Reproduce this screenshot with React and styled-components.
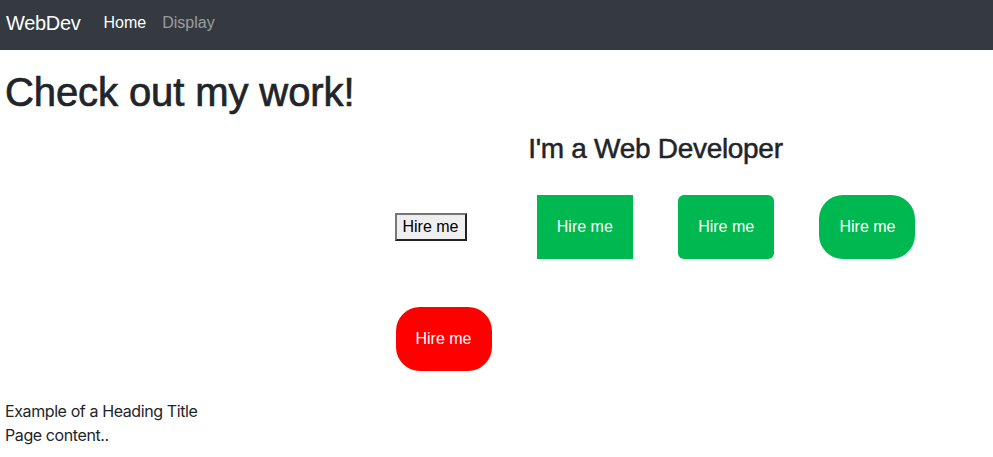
import React from "react";
import styled, { createGlobalStyle } from "styled-components";

const Global = createGlobalStyle`
  html, body { margin: 0; padding: 0; background: #fff; }
  body { font-family: "Liberation Sans", Arial, sans-serif; color: #212529; font-size: 16px; line-height: 1.5; }
`;

const Navbar = styled.nav`
  height: 50px;
  background: #343a40;
  display: flex;
  align-items: center;
  padding: 0 6px 4px;
  box-sizing: border-box;
`;

const Brand = styled.a`
  color: #fff;
  font-size: 20px;
  letter-spacing: -0.3px;
  margin-right: 23px;
  text-decoration: none;
`;

const NavLink = styled.a`
  color: ${(p) => (p.$active ? "#fff" : "rgba(255,255,255,0.5)")};
  font-size: 16px;
  margin-right: 16px;
  text-decoration: none;
`;

const Title = styled.h1`
  font-family: "Liberation Sans", Arial, sans-serif;
  font-size: 40px;
  font-weight: 500;
  letter-spacing: -0.1px;
  -webkit-text-stroke: 0.7px currentColor;
  line-height: 1.2;
  margin: 18px 0 0 5px;
`;

const Section = styled.div`
  display: flex;
  padding-left: 395.5px;
`;

const Showcase = styled.div`
  width: 520px;
  display: flex;
  flex-direction: column;
  align-items: center;
`;

const SubTitle = styled.h3`
  font-family: "Liberation Sans", Arial, sans-serif;
  font-size: 28px;
  font-weight: 500;
  letter-spacing: -0.3px;
  -webkit-text-stroke: 0.5px currentColor;
  line-height: 1.2;
  margin: 16px 0 29px;
`;

const ButtonGrid = styled.div`
  width: 100%;
  display: grid;
  grid-template-columns: repeat(4, 96px);
  column-gap: 45.33px;
  row-gap: 48px;
  align-items: center;
  justify-items: start;
`;

const PlainButton = styled.button`
  font-family: "Liberation Sans", Arial, sans-serif;
  font-size: 16px;
  line-height: 20px;
  height: 28px;
  margin-left: -1px;
  padding: 1px 6px;
  background: #efefef;
  color: #000;
  border: 2px solid;
  border-color: #767676 #222 #222 #767676;
`;

const HireButton = styled.button`
  width: 96px;
  height: 64px;
  border: none;
  color: #fff;
  font-family: "Liberation Sans", Arial, sans-serif;
  font-size: 16px;
  background: ${(p) => (p.$danger ? "#ff0000" : "#00b850")};
  border-radius: ${(p) => p.$radius || 0};
`;

const Footer = styled.div`
  margin: 28px 0 0 5px;
  font-family: Inter, "Liberation Sans", sans-serif;
  font-size: 16px;
  letter-spacing: -0.4px;
  line-height: 24px;
  color: #212529;
`;

export default function App() {
  return (
    <>
      <Global />
      <Navbar>
        <Brand>WebDev</Brand>
        <NavLink $active>Home</NavLink>
        <NavLink>Display</NavLink>
      </Navbar>
      <Title>Check out my work!</Title>
      <Section>
        <Showcase>
          <SubTitle>I'm a Web Developer</SubTitle>
          <ButtonGrid>
            <PlainButton>Hire me</PlainButton>
            <HireButton>Hire me</HireButton>
            <HireButton $radius="6px">Hire me</HireButton>
            <HireButton $radius="24px">Hire me</HireButton>
            <HireButton $danger $radius="24px">Hire me</HireButton>
          </ButtonGrid>
        </Showcase>
      </Section>
      <Footer>
        <div>Example of a Heading Title</div>
        <div>Page content..</div>
      </Footer>
    </>
  );
}
